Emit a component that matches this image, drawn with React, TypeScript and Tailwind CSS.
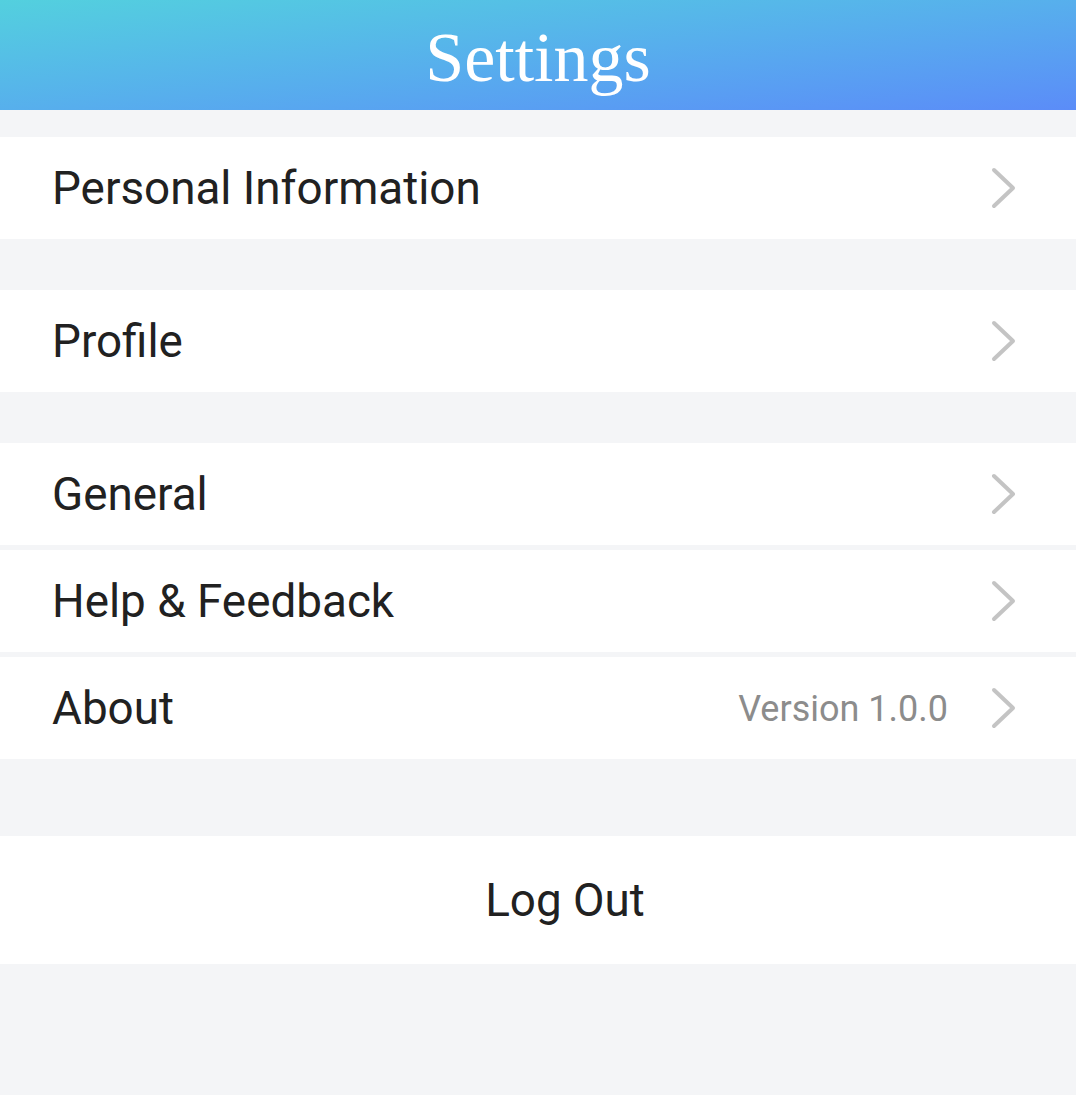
import { ReactNode } from 'react'

function Chevron() {
  return (
    <svg width="28" height="44" viewBox="0 0 28 44" fill="none" className="shrink-0">
      <path d="M4 4 L23 22 L4 40" stroke="#c4c4c4" strokeWidth="4" strokeLinecap="round" strokeLinejoin="round" />
    </svg>
  )
}

function Row({ label, extra }: { label: string; extra?: ReactNode }) {
  return (
    <div className="flex items-center h-[102px] bg-white pl-[52px] pr-[58px]">
      <span className="flex-1 text-[45.8px] text-[#212121] leading-none mt-[2px]">{label}</span>
      {extra && <span className="text-[36px] text-[#8c8c8c] mr-[42px] leading-none mt-[2px]">{extra}</span>}
      <Chevron />
    </div>
  )
}

export default function App() {
  return (
    <div className="min-h-[1095px] bg-[#f4f5f7]" style={{ fontFamily: 'Roboto, "Noto Sans", sans-serif' }}>
      {/* Header */}
      <div className="h-[110px] flex items-center justify-center bg-gradient-to-br from-[#53d0de] to-[#5b8cf8]">
        <h1 className="text-white text-[70px] leading-none mt-[6px]" style={{ fontFamily: '"Liberation Serif", serif' }}>
          Settings
        </h1>
      </div>

      <div className="pt-[27px] flex flex-col">
        <Row label="Personal Information" />
        <div className="h-[51px]" />
        <Row label="Profile" />
        <div className="h-[51px]" />
        <div className="flex flex-col gap-[5px]">
          <Row label="General" />
          <Row label="Help & Feedback" />
          <Row label="About" extra="Version 1.0.0" />
        </div>
        <div className="h-[77px]" />
        <button className="h-[128px] bg-white flex items-center justify-center pl-[54px] text-[45.8px] text-[#212121] leading-none">
          <span className="mt-[2px]">Log Out</span>
        </button>
      </div>
    </div>
  )
}
